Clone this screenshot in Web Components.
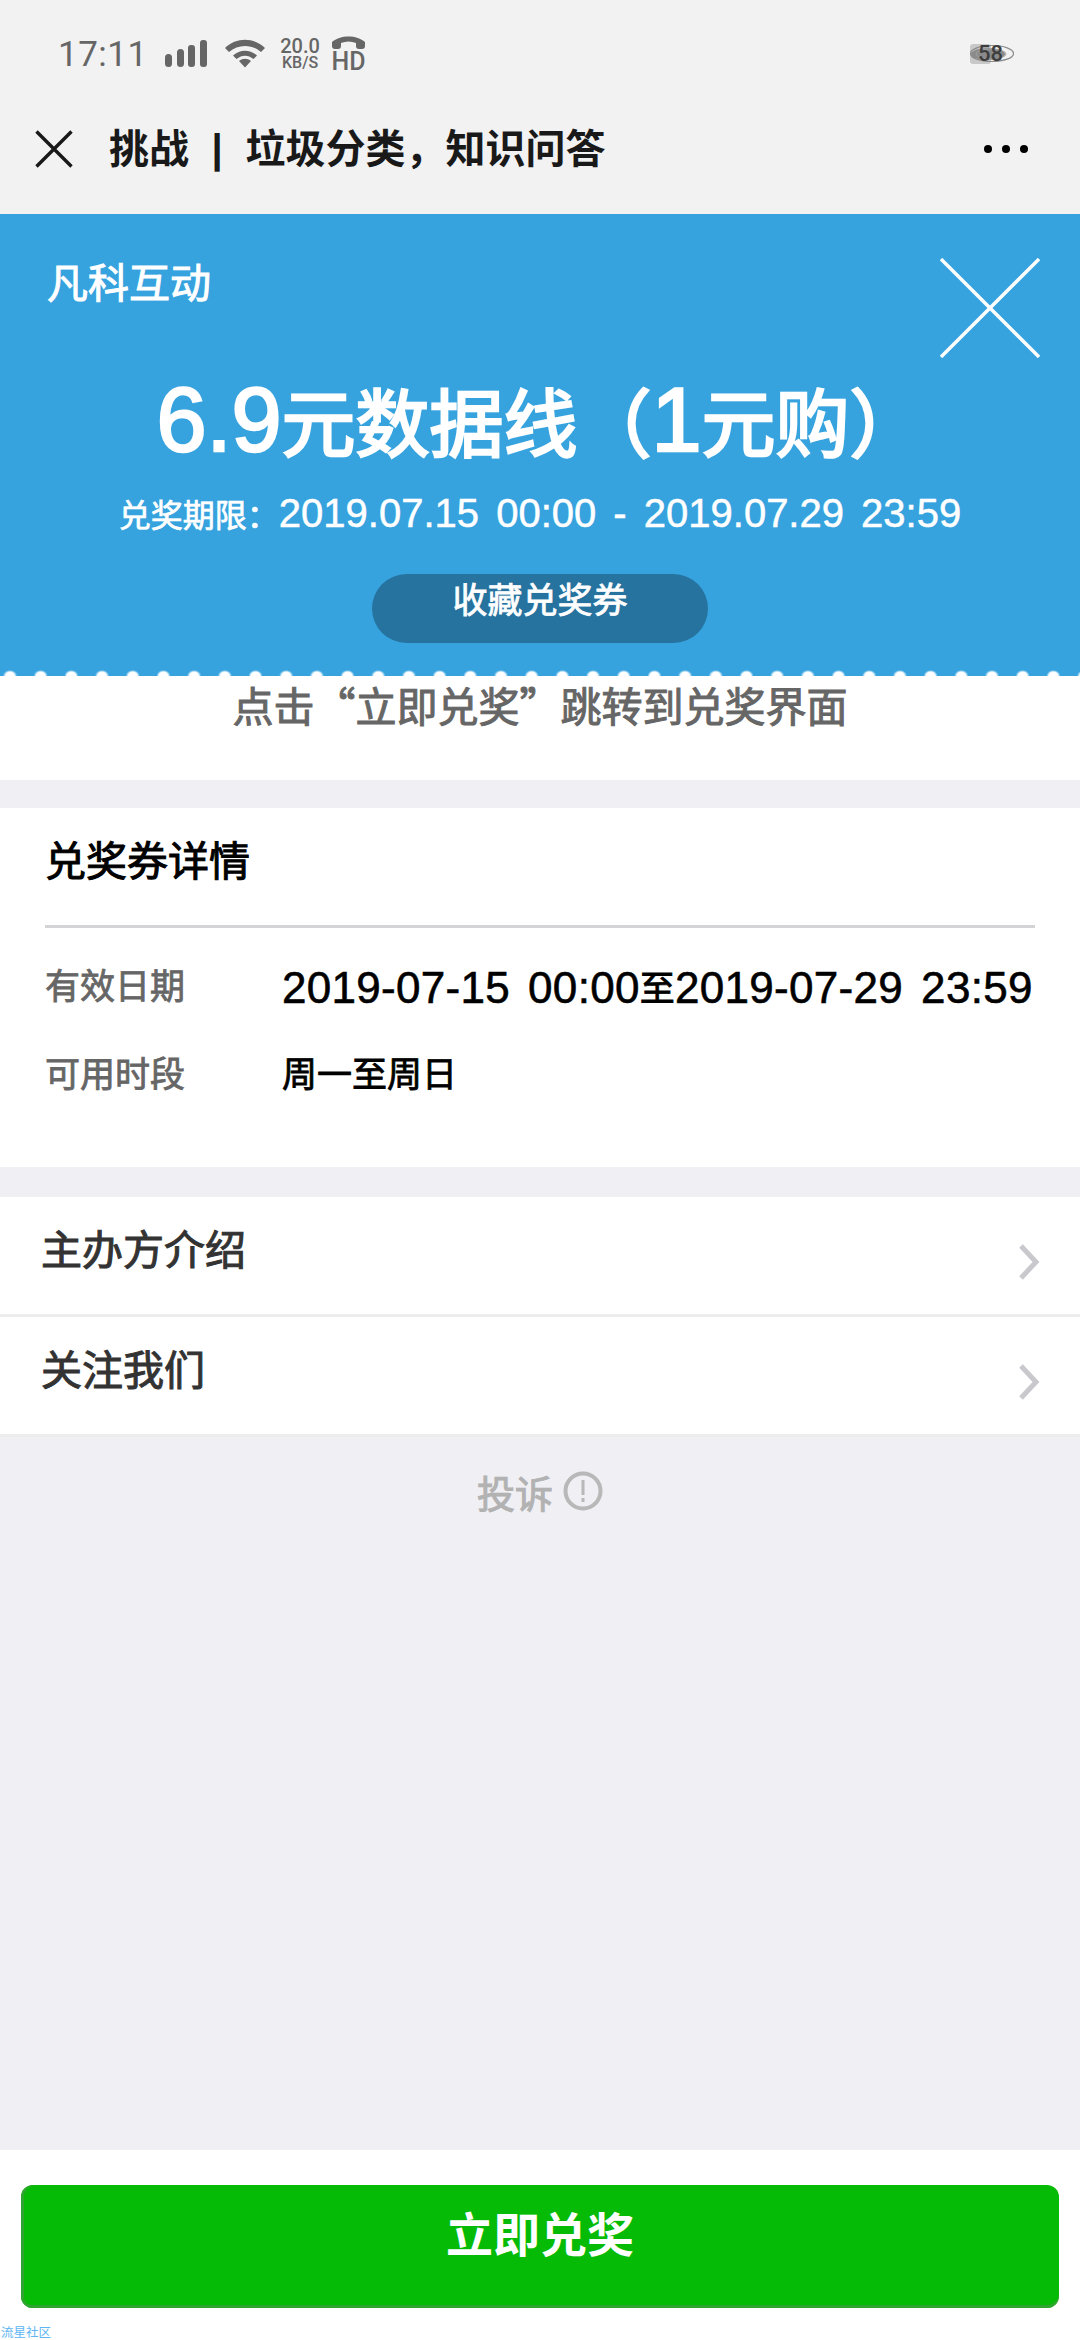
<!DOCTYPE html>
<html lang="zh">
<head>
<meta charset="utf-8">
<title>兑奖券</title>
<style>
  html, body { margin: 0; padding: 0; }
  body {
    width: 1080px; height: 2340px; overflow: hidden;
    background: #efeff4;
    font-family: "Liberation Sans", "Noto Sans CJK SC", sans-serif;
  }
  app-page { height: 2340px; }
</style>
</head>
<body>
<app-page>
  <status-bar></status-bar>
  <nav-bar>挑战 | 垃圾分类，知识问答</nav-bar>
  <coupon-head></coupon-head>
  <coupon-tip>点击“立即兑奖”跳转到兑奖界面</coupon-tip>
  <coupon-detail></coupon-detail>
  <link-list>
    <link-row>主办方介绍</link-row>
    <link-row>关注我们</link-row>
  </link-list>
  <complain-link></complain-link>
  <foot-bar></foot-bar>
</app-page>

<script>
const FONT = `"Liberation Sans", "Noto Sans CJK SC", sans-serif`
const CJK = `"Noto Sans CJK SC", sans-serif`
const NUM = `Roboto, "Noto Sans CJK SC", sans-serif`

function define(name, html) {
  customElements.define(name, class extends HTMLElement {
    constructor() {
      super();
      this.attachShadow({mode: 'open'}).innerHTML = html;
    }
  })
}

define('app-page', `<style>
  :host { display: flex; flex-direction: column; }
</style><slot></slot>`)

define('status-bar', `<style>
  :host { display: flex; align-items: center; height: 100px; padding: 8px 0 0 58px; box-sizing: border-box; background: #f2f2f2; color: #666; font-family: ${NUM}; }
  .time { font-size: 35px; letter-spacing: .5px; width: 107px; }
  svg { display: block; flex: none; }
  .speed { display: flex; flex-direction: column; align-items: center; width: 40px; margin: -2px 12px 0 15px; font-weight: 500; }
  .speed b { font-weight: 500; font-size: 20px; line-height: 20px; }
  .speed i { font-style: normal; font-size: 16px; line-height: 14px; }
  .call { display: flex; flex-direction: column; align-items: center; width: 33px; }
  .call span { font-size: 25px; font-weight: 500; line-height: 20px; margin-top: 3px; }
  .battery { margin-left: auto; margin-right: 66px; position: relative; width: 44px; height: 20px; }
  .battery span { position: absolute; left: 8px; top: -3px; font-size: 22px; font-weight: 500; color: #3d3d3d; line-height: 26px; }
</style>
<span class="time">17:11</span>
<svg width="42" height="28" viewBox="0 0 42 28" fill="#666"><rect x="0" y="14" width="7" height="13" rx="3.5"/><rect x="12" y="9" width="7" height="18" rx="3.5"/><rect x="23" y="5" width="7" height="22" rx="3"/><rect x="35" y="0" width="7" height="27" rx="3"/></svg>
<svg style="margin-left:18px" width="40" height="30" viewBox="0 0 40 30" fill="#666"><path d="M0 9 C11 -2 29 -2 40 9 L36 13 C27 5 13 5 4 13 Z"/><path d="M8 16.500 C15 10 25 10 32 16.500 L28.500 20 C23 15.500 17 15.500 11.500 20 Z"/><path d="M14 22 C18 19 22 19 26 22 L20 28.500 Z"/></svg>
<div class="speed"><b>20.0</b><i>KB/S</i></div>
<div class="call">
  <svg width="33" height="13" viewBox="0 0 33 13" fill="#666"><path d="M0 6 C8 -1.500 25 -1.500 33 6 V10 Q33 13 30 13 H27 Q24 13 24 10 V7 C19 5 14 5 9 7 V10 Q9 13 6 13 H3 Q0 13 0 10 Z"/></svg>
  <span>HD</span>
</div>
<div class="battery">
  <svg width="44" height="20" viewBox="0 0 44 20" fill="none"><rect x="0" y="0" width="21" height="20" rx="3" fill="#c8c8c8"/><ellipse cx="18" cy="10" rx="17" ry="6" fill="#8a8a8a"/><ellipse cx="22" cy="9.500" rx="21.500" ry="8" stroke="#8a8a8a" stroke-width="1.200"/><ellipse cx="21" cy="10" rx="15" ry="5" stroke="#a0a0a0"/></svg>
  <span>58</span>
</div>`)

define('nav-bar', `<style>
  :host { display: flex; align-items: center; height: 114px; padding: 0 0 16px 35px; box-sizing: border-box; background: #f2f2f2; color: #191919; font-family: ${FONT}; }
  svg { flex: none; display: block; }
  .title { font-size: 40px; font-weight: 700; margin-left: 36px; line-height: 1; word-spacing: 11.5px; white-space: nowrap; }
  .more { margin-left: auto; margin-right: 51px; }
</style>
<svg width="38" height="38" viewBox="0 0 38 38" stroke="#191919" stroke-width="3.400"><path d="M1.500 1.500 L36.500 36.500 M36.500 1.500 L1.500 36.500"/></svg>
<span class="title"><slot></slot></span>
<svg class="more" width="46" height="10" viewBox="0 0 46 10" fill="#000"><circle cx="5" cy="5" r="4"/><circle cx="23" cy="5" r="4"/><circle cx="41" cy="5" r="4"/></svg>`)

define('coupon-head', `<style>
  :host { display: flex; flex-direction: column; position: relative; height: 462px; box-sizing: border-box; background: #36a3df; color: #fff; font-family: ${FONT}; padding: 42px 0 0 47px; }
  .brand { font-size: 41px; line-height: 56px; -webkit-text-stroke: 1px #fff; }
  .close { position: absolute; left: 940px; top: 44px; display: block; }
  h1 { margin: 64px 0 0 -47px; text-align: center; font-size: 90px; font-weight: 400; line-height: 88px; white-space: nowrap; -webkit-text-stroke: 2.500px #fff; }
  h1 span { font-size: 74px; }
  .period { margin: 19px 0 0 -47px; text-align: center; font-size: 40px; line-height: 48px; word-spacing: 6px; white-space: nowrap; -webkit-text-stroke: .5px #fff; }
  .period b { font-weight: 400; font-size: 32px; -webkit-text-stroke: .7px #fff; }
  .save { align-self: center; margin: 34px 0 0 -47px; width: 336px; height: 69px; border-radius: 35px; background: #26739f; text-align: center; font-size: 35px; line-height: 54px; -webkit-text-stroke: .8px #fff; }
  .teeth { position: absolute; left: 0; right: 0; bottom: 0; height: 6px; background: radial-gradient(ellipse 7px 6px at 15.350px 6px, #fff 65%, rgba(255,255,255,0) 100%) -5.350px 0 / 30.700px 6px repeat-x; }
</style>
<div class="brand">凡科互动</div>
<svg class="close" width="100" height="100" viewBox="0 0 100 100" stroke="#fff" stroke-width="3.400"><path d="M1 1 L99 99 M99 1 L1 99"/></svg>
<h1>6.9<span>元数据线（</span>1<span>元购）</span></h1>
<div class="period"><b>兑奖期限：</b>2019.07.15 00:00 - 2019.07.29 23:59</div>
<div class="save">收藏兑奖券</div>
<div class="teeth"></div>`)

define('coupon-tip', `<style>
  :host { display: block; height: 104px; background: #fff; color: #666; font-family: ${CJK}; font-size: 41px; text-align: center; line-height: 56px; margin-bottom: 28px; -webkit-text-stroke: 1px #666; }
</style><slot></slot>`)

define('coupon-detail', `<style>
  :host { display: block; height: 359px; box-sizing: border-box; background: #fff; padding: 0 45px; font-family: ${FONT}; margin-bottom: 30px; }
  h2 { margin: 0; height: 120px; box-sizing: border-box; padding-top: 26px; font-size: 41px; font-weight: 400; line-height: 56px; color: #000; border-bottom: 3px solid #d4d4d6; -webkit-text-stroke: 1px #000; }
  .row { display: grid; grid-template-columns: 237px 1fr; align-items: center; height: 88px; white-space: nowrap; }
  .row:first-of-type { margin-top: 14px; }
  .k { color: #666; font-size: 35px; padding-bottom: 6px; -webkit-text-stroke: .8px #666; }
  .v { color: #000; font-size: 35px; padding-bottom: 6px; -webkit-text-stroke: .8px #000; }
  .d { font-size: 44px; letter-spacing: .3px; word-spacing: 5.5px; padding-bottom: 0; -webkit-text-stroke: .6px #000; }
  .d span { font-size: 35px; vertical-align: 2px; -webkit-text-stroke: .8px #000; }
</style>
<h2>兑奖券详情</h2>
<div class="row"><span class="k">有效日期</span><span class="v d">2019-07-15 00:00<span>至</span>2019-07-29 23:59</span></div>
<div class="row"><span class="k">可用时段</span><span class="v">周一至周日</span></div>`)

define('link-list', `<style>
  :host { display: flex; flex-direction: column; background: #ededed; gap: 3px; padding-bottom: 3px; }
</style><slot></slot>`)

define('link-row', `<style>
  :host { display: flex; align-items: flex-start; height: 117px; box-sizing: border-box; background: #fff; padding: 26px 40px 0 41px; color: #333; font-family: ${FONT}; font-size: 41px; line-height: 56px; justify-content: space-between; -webkit-text-stroke: 1px #333; }
  svg { display: block; margin-top: 21px; }
</style>
<span><slot></slot></span>
<svg width="22" height="36" viewBox="0 0 22 36" fill="none" stroke="#c8c8cd" stroke-width="5"><path d="M3 2 L18 18 L3 34"/></svg>`)

define('complain-link', `<style>
  :host { display: flex; justify-content: center; align-items: center; gap: 10px; height: 108px; color: #b2b2b2; font-family: ${FONT}; font-size: 38px; flex: none; -webkit-text-stroke: 1px #b2b2b2; }
  svg { display: block; }
</style>
<span>投诉</span>
<svg width="40" height="40" viewBox="0 0 40 40" fill="none" stroke="#b8b8b8" stroke-width="4"><circle cx="20" cy="20" r="17.500"/><path d="M20 9 V24 M20 27 V31" stroke-width="3"/></svg>`)

define('foot-bar', `<style>
  :host { display: block; position: relative; margin-top: auto; height: 190px; box-sizing: border-box; background: #fff; padding: 35px 21px 0; font-family: ${FONT}; }
  .btn { height: 123px; border-radius: 12px; background: #05bb05; box-shadow: inset 0 -3px 0 #2fa52f, inset 3px 0 0 #2fa52f; color: #fff; font-size: 47px; font-weight: 700; text-align: center; line-height: 102px; }
  .mark { position: absolute; left: 1px; bottom: 0; font-size: 12.500px; line-height: 14px; color: #5db5f2; }
</style>
<div class="btn">立即兑奖</div>
<div class="mark">流星社区</div>`)
</script>
</body>
</html>
